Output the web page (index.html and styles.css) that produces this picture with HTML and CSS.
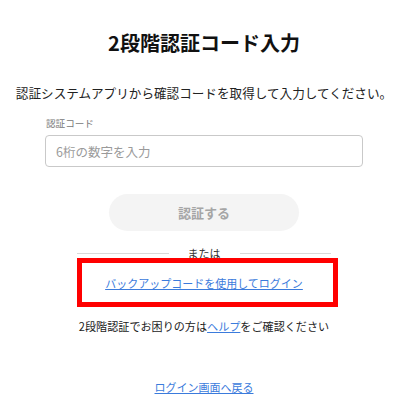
FILE: index.html
```html
<!DOCTYPE html>
<html lang="ja">
<head>
<meta charset="utf-8">
<title>2段階認証コード入力</title>
<link rel="stylesheet" href="styles.css">
</head>
<body>
<main class="page">
  <h1 class="title">2段階認証コード入力</h1>
  <p class="lead">認証システムアプリから確認コードを取得して入力してください。</p>
  <form class="form">
    <label class="label" for="code">認証コード</label>
    <input class="input" id="code" type="text" placeholder="6桁の数字を入力">
    <button class="submit" type="button">認証する</button>
  </form>
  <div class="divider"><span class="divider-text">または</span></div>
  <div class="alt-row">
    <a class="link" href="#">バックアップコードを使用してログイン</a>
    <span class="highlight"></span>
  </div>
  <p class="help">2段階認証でお困りの方は<a class="link" href="#">ヘルプ</a>をご確認ください</p>
  <a class="link back" href="#">ログイン画面へ戻る</a>
</main>
</body>
</html>
```
FILE: styles.css
```css
* { box-sizing: border-box; }
html, body { margin: 0; padding: 0; background: #fff; }
body {
  font-family: "Noto Sans CJK JP", "Noto Sans", sans-serif;
  color: #222;
}
.page {
  width: 408px;
  display: flex;
  flex-direction: column;
  align-items: center;
  padding-top: 29px;
}
.title {
  margin: 0;
  font-size: 20px;
  line-height: 28px;
  font-weight: 700;
  color: #111;
}
.lead {
  margin: 27px 0 0;
  font-size: 12.6px;
  line-height: 18px;
  color: #222;
  white-space: nowrap;
}
.form {
  width: 318px;
  margin-top: 14px;
  display: flex;
  flex-direction: column;
}
.label {
  font-size: 9.6px;
  line-height: 14px;
  color: #777;
  padding-left: 1px;
}
.input {
  margin-top: 5px;
  height: 32px;
  border: 1px solid #c9c9c9;
  border-radius: 4px;
  padding: 0 10px;
  font-family: inherit;
  font-size: 12.5px;
  color: #222;
  outline: none;
}
.input::placeholder { color: #9a9a9a; }
.submit {
  align-self: center;
  margin-top: 27px;
  width: 190px;
  height: 37px;
  border: none;
  border-radius: 19px;
  background: #f4f4f4;
  color: #a5a5a5;
  font-family: inherit;
  font-weight: 700;
  font-size: 13px;
}
.divider {
  margin-top: 14px;
  width: 254px;
  display: flex;
  align-items: center;
  gap: 19px;
}
.divider::before, .divider::after {
  content: "";
  flex: 1;
  height: 1px;
  background: #d9d9d9;
}
.divider-text {
  font-size: 11px;
  line-height: 16px;
  color: #333;
}
.alt-row {
  position: relative;
  width: 408px;
  margin-top: 14px;
  text-align: center;
  font-size: 11px;
  line-height: 16px;
}
.highlight {
  position: absolute;
  left: 77px;
  top: -17px;
  width: 261px;
  height: 49px;
  border: 5px solid #ff0000;
}
.link {
  color: #3b7bdc;
  text-decoration: underline;
}
.help {
  margin: 27px 0 0;
  font-size: 11.1px;
  line-height: 16px;
  color: #222;
  white-space: nowrap;
}
.back {
  margin-top: 45px;
  font-size: 11px;
  line-height: 16px;
}
```
